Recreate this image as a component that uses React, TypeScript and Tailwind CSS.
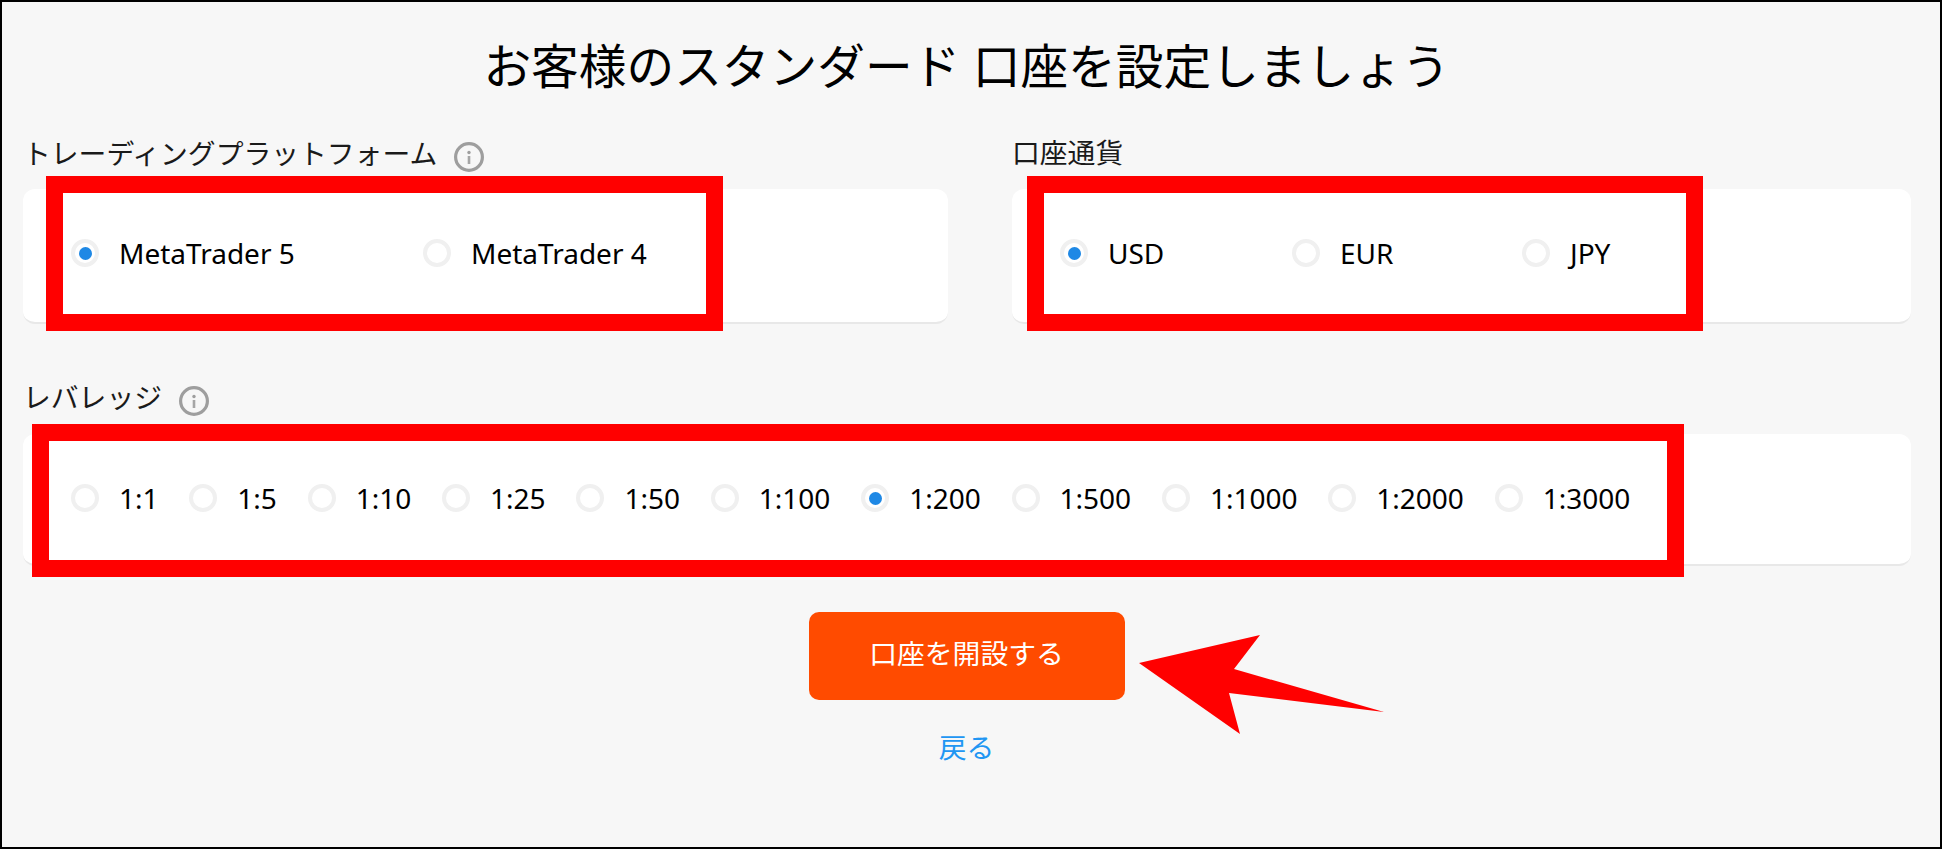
import React from "react";

const FONT = "font-['Noto_Sans','Noto_Sans_CJK_JP',sans-serif]";

function Info() {
  return (
    <svg viewBox="0 0 30 30" className="mt-[6px] h-[30px] w-[30px] shrink-0">
      <circle cx="15" cy="15" r="13.4" fill="none" stroke="#9e9e9e" strokeWidth="3.2" />
      <circle cx="15" cy="10.5" r="1.7" fill="#9e9e9e" />
      <rect x="13.7" y="14" width="2.6" height="8" fill="#a6a6a6" />
    </svg>
  );
}

function Radio({ label, checked, className = "" }: { label: string; checked?: boolean; className?: string }) {
  return (
    <div className={`flex items-center gap-[20px] ${className}`}>
      <span className="flex h-[28px] w-[28px] shrink-0 items-center justify-center rounded-full border-[4px] border-[#f0f0f0] bg-white">
        {checked ? <span className="h-[13px] w-[13px] rounded-full bg-[#1e88e5]" /> : null}
      </span>
      <span className="text-[28px] leading-none text-black">{label}</span>
    </div>
  );
}

const LEVERAGES = ["1:1", "1:5", "1:10", "1:25", "1:50", "1:100", "1:200", "1:500", "1:1000", "1:2000", "1:3000"];

export default function App() {
  return (
    <div className={`relative h-[849px] w-[1942px] overflow-hidden border-2 border-black bg-[#f7f7f7] ${FONT}`}>
      <h1 className="pt-[32px] pr-[9px] text-center text-[47.7px] leading-[64px] font-normal text-black">
        お客様のスタンダード 口座を設定しましょう
      </h1>

      <div className="mt-[37px] grid grid-cols-[925px_899px] gap-x-[64px] pl-[21px]">
        <section>
          <div className="flex h-[38px] items-center gap-[17px] text-[27.8px] text-[#1a1a1a]">
            <span>トレーディングプラットフォーム</span>
            <Info />
          </div>
          <div className="relative mt-[16px] flex h-[135px] items-center rounded-[12px] border-b-2 border-[#e8e8e8] bg-white pb-[5px] pl-[48px]">
            <Radio label="MetaTrader 5" checked className="w-[352px]" />
            <Radio label="MetaTrader 4" />
            <div className="pointer-events-none absolute left-[23px] top-[-13px] h-[155px] w-[677px] border-[17px] border-[#ff0000]" />
          </div>
        </section>
        <section>
          <div className="flex h-[38px] items-center pb-[3px] text-[27.8px] text-[#1a1a1a]">
            <span>口座通貨</span>
          </div>
          <div className="relative mt-[16px] flex h-[135px] items-center rounded-[12px] border-b-2 border-[#e8e8e8] bg-white pb-[5px] pl-[48px]">
            <Radio label="USD" checked className="w-[232px]" />
            <Radio label="EUR" className="w-[230px]" />
            <Radio label="JPY" />
            <div className="pointer-events-none absolute left-[15px] top-[-13px] h-[155px] w-[676px] border-[17px] border-[#ff0000]" />
          </div>
        </section>
      </div>

      <section className="mt-[55px] ml-[21px] w-[1888px]">
        <div className="flex h-[38px] items-center gap-[17px] text-[27.8px] text-[#1a1a1a]">
          <span>レバレッジ</span>
          <Info />
        </div>
        <div className="relative mt-[17px] flex h-[132px] items-center gap-[30.8px] rounded-[12px] border-b-2 border-[#e8e8e8] bg-white pb-[2px] pl-[48px]">
          {LEVERAGES.map((l) => (
            <Radio key={l} label={l} checked={l === "1:200"} />
          ))}
          <div className="pointer-events-none absolute left-[9px] top-[-10px] h-[153px] w-[1652px] border-[17px] border-[#ff0000]" />
        </div>
      </section>

      <div className="mt-[46px] flex flex-col items-center pr-[9px]">
        <button className="h-[88px] w-[316px] rounded-[10px] bg-[#ff4b00] pb-[4px] text-[27.8px] text-white">口座を開設する</button>
        <a className="mt-[22px] text-[27.8px] leading-[50px] text-[#2196f3]">戻る</a>
      </div>

      <svg className="pointer-events-none absolute left-0 top-0" width="1938" height="845" viewBox="2 2 1938 845">
        <polygon points="1139,663 1260,635 1234,669 1384,712 1229,693 1240,734" fill="#ff0000" />
      </svg>
    </div>
  );
}
